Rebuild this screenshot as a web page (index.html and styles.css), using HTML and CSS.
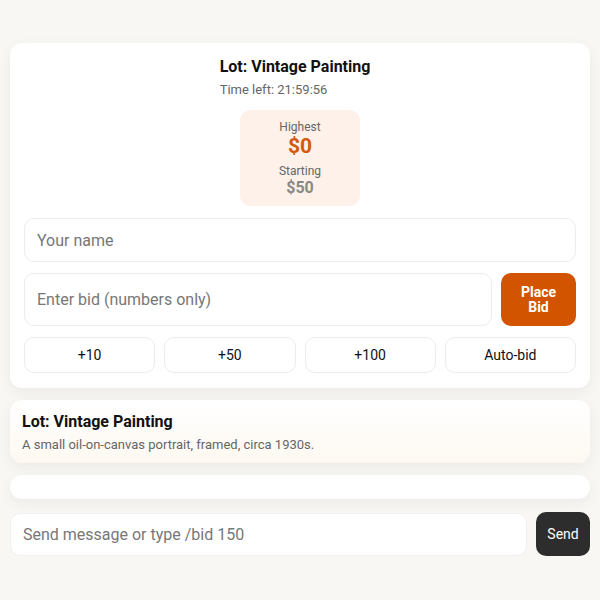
FILE: index.html
```html
<!DOCTYPE html>
<html>
<head>
<meta charset="utf-8">
<link rel="stylesheet" href="styles.css">
</head>
<body>
<div class="page">
  <section class="card main">
    <div class="head">
      <div class="head-inner">
        <div class="title">Lot: Vintage Painting</div>
        <div class="time">Time left: 21:59:56</div>
      </div>
    </div>
    <div class="stats-wrap">
      <div class="stats">
        <div class="lbl">Highest</div>
        <div class="high">$0</div>
        <div class="lbl lbl2">Starting</div>
        <div class="start">$50</div>
      </div>
    </div>
    <div class="field name">Your name</div>
    <div class="bid-row">
      <div class="field bid">Enter bid (numbers only)</div>
      <button class="place">Place<br>Bid</button>
    </div>
    <div class="quick">
      <button class="qb">+10</button>
      <button class="qb">+50</button>
      <button class="qb">+100</button>
      <button class="qb">Auto-bid</button>
    </div>
  </section>
  <section class="card info">
    <div class="info-title">Lot: Vintage Painting</div>
    <div class="info-desc">A small oil-on-canvas portrait, framed, circa 1930s.</div>
  </section>
  <section class="card empty"></section>
  <div class="chat">
    <div class="field msg">Send message or type /bid 150</div>
    <button class="send">Send</button>
  </div>
</div>
</body>
</html>
```
FILE: styles.css
```css
* { box-sizing: border-box; }
html, body { margin: 0; padding: 0; }
body {
  background: #f8f7f4;
  font-family: Roboto, "Liberation Sans", sans-serif;
  color: #111;
}
.page {
  padding: 43px 10px 0;
  display: flex;
  flex-direction: column;
  gap: 12px;
}
.card {
  background: #fff;
  border-radius: 12px;
  box-shadow: 0 4px 14px rgba(0,0,0,0.06);
}
.main {
  padding: 14px 14px 15px;
  display: flex;
  flex-direction: column;
}
.head { display: flex; justify-content: center; }
.head-inner { margin-left: -10px; }
.title { font-size: 16px; font-weight: 700; line-height: 20px; color: #111; }
.time { font-size: 13px; color: #666; line-height: 16px; margin-top: 5px; }
.stats-wrap { display: flex; justify-content: center; margin-top: 12px; }
.stats {
  width: 120px;
  height: 96px;
  background: #fdf1ea;
  border-radius: 10px;
  text-align: center;
  padding-top: 10px;
}
.lbl { font-size: 12px; color: #666; line-height: 15px; }
.lbl2 { margin-top: 8px; line-height: 13px; }
.high { font-size: 21px; font-weight: 700; color: #d35a0d; line-height: 22px; }
.start { font-size: 16px; font-weight: 700; color: #888; line-height: 19px; }
.field {
  background: #fff;
  border: 1px solid #ececec;
  border-radius: 10px;
  font-size: 16px;
  color: #777;
  display: flex;
  align-items: center;
  padding-left: 12px;
}
.name { height: 44px; margin-top: 12px; }
.bid-row { display: flex; gap: 9px; margin-top: 11px; }
.bid { flex: 1; height: 53px; }
.place {
  width: 75px;
  height: 53px;
  border: none;
  border-radius: 10px;
  background: #d35400;
  color: #fff;
  font-family: inherit;
  font-size: 14px;
  font-weight: 700;
  line-height: 15px;
}
.quick {
  display: grid;
  grid-template-columns: repeat(4, 1fr);
  gap: 9px;
  margin-top: 11px;
}
.qb {
  height: 36px;
  background: #fff;
  border: 1px solid #ececec;
  border-radius: 10px;
  font-family: inherit;
  font-size: 14px;
  color: #111;
}
.info {
  background: linear-gradient(180deg, #ffffff, #fdf8f1);
  padding: 12px 12px 12px;
  height: 63px;
}
.info-title { font-size: 16px; font-weight: 700; line-height: 20px; }
.info-desc { font-size: 13px; color: #666; margin-top: 5px; line-height: 16px; }
.empty { height: 24px; }
.chat { display: flex; gap: 9px; align-items: center; margin-top: 1px; }
.msg { flex: 1; height: 43px; border-color: #f0f0f0; border-radius: 10px; }
.send {
  width: 54px;
  height: 44px;
  border: none;
  border-radius: 10px;
  background: #2d2d2d;
  color: #fff;
  font-family: inherit;
  font-size: 14px;
}
```
